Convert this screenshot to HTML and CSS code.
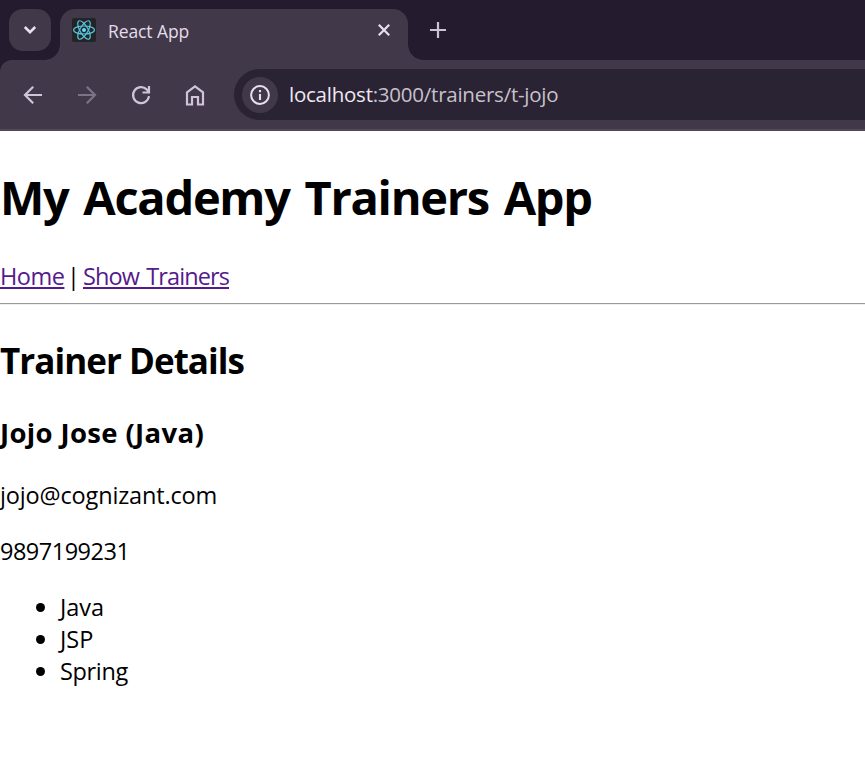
FILE: index.html
```
<!DOCTYPE html>
<html lang="en">
<head>
<meta charset="utf-8">
<title>React App</title>
<link rel="stylesheet" href="styles.css">
</head>
<body>
<header class="browser">
  <div class="tabs">
    <button class="search-tabs" aria-label="Search tabs"><svg width="14" height="10" viewBox="0 0 14 10"><path d="M1.8 2 7 7.2 12.2 2" fill="none" stroke="#e9e0ee" stroke-width="2.6"/></svg></button>
    <div class="tab">
      <svg class="favicon" width="24" height="24" viewBox="0 0 24 24"><rect width="24" height="24" rx="2" fill="#222426"/><g fill="none" stroke="#58c4df" stroke-width="1.2"><ellipse cx="12" cy="12" rx="10.4" ry="4"/><ellipse cx="12" cy="12" rx="10.4" ry="4" transform="rotate(60 12 12)"/><ellipse cx="12" cy="12" rx="10.4" ry="4" transform="rotate(120 12 12)"/></g><circle cx="12" cy="12" r="2" fill="#61dafb"/></svg>
      <span class="tab-title">React App</span>
      <svg class="close" width="12" height="12" viewBox="0 0 12 12"><path d="M.8.8 11.2 11.2M11.2.8.8 11.2" stroke="#e9e0ee" stroke-width="2.2"/></svg>
    </div>
    <svg class="new-tab" width="16" height="16" viewBox="0 0 16 16"><path d="M8 0V16M0 8H16" stroke="#cfc1d8" stroke-width="2.2"/></svg>
  </div>
  <div class="toolbar">
    <svg class="tool" width="24" height="24" viewBox="0 0 24 24"><path d="M21 12H4.5M12.2 3.8 4 12l8.2 8.2" fill="none" stroke="#d0c3da" stroke-width="2.2"/></svg>
    <svg class="tool" width="24" height="24" viewBox="0 0 24 24"><path d="M3 12H19.5M11.8 3.8 20 12l-8.2 8.2" fill="none" stroke="#7d7386" stroke-width="2.2"/></svg>
    <svg class="tool" width="24" height="24" viewBox="0 0 24 24"><path d="M20 13.2A8 8 0 1 1 17.700 6.400L20 8.800M20 3V9.500H13.500" fill="none" stroke="#d0c3da" stroke-width="2.2"/></svg>
    <svg class="tool" width="24" height="24" viewBox="0 0 24 24"><path d="M4 9.3 12 3.3l8 6V21.500H15V14H9v7.500H4Z" fill="none" stroke="#d0c3da" stroke-width="2.2"/></svg>
    <div class="address">
      <span class="site-info"><svg width="20" height="20" viewBox="0 0 20 20"><circle cx="10" cy="10" r="8.900" fill="none" stroke="#e9e0ee" stroke-width="2"/><path d="M10 9v6M10 5v2.200" stroke="#e9e0ee" stroke-width="2.100"/></svg></span>
      <span class="url"><span class="host">localhost</span><span class="path">:3000/trainers/t-jojo</span></span>
    </div>
  </div>
</header>
<main>
  <h1>My Academy Trainers App</h1>
  <nav><a class="home" href="#">Home</a><span class="divider">|</span><a class="show" href="#">Show Trainers</a></nav>
  <hr>
  <h2>Trainer Details</h2>
  <h3>Jojo Jose (Java)</h3>
  <p class="email">jojo@cognizant.com</p>
  <p class="phone">9897199231</p>
  <ul><li>Java</li><li>JSP</li><li class="spring">Spring</li></ul>
</main>
</body>
</html>
```
FILE: styles.css
```
* { box-sizing: border-box; }
body { margin: 0; background: #fff; color: #000; font: 23.5px/32px "Open Sans", "Noto Sans", sans-serif; overflow: hidden; }
svg { display: block; flex: none; }
.browser { height: 131px; background: #241c2e; }
.tabs { height: 60px; display: flex; padding: 9px 0 0 9px; }
.search-tabs { width: 42px; height: 42px; border: 0; border-radius: 14px; padding: 0; background: #41394a; display: grid; place-items: center; }
.tab { position: relative; width: 348px; height: 51px; margin-left: 9px; padding: 0 18px 9px 12px; background: #41394a; border-radius: 15px 15px 0 0; display: flex; align-items: center; }
.tab::before, .tab::after { content: ""; position: absolute; bottom: 0; width: 15px; height: 15px; }
.tab::before { right: 100%; background: radial-gradient(circle at 0 0, transparent 14.5px, #41394a 15px); }
.tab::after { left: 100%; background: radial-gradient(circle at 100% 0, transparent 14.5px, #41394a 15px); }
.tab-title { margin: 2px 0 0 12px; color: #e5dce9; font-size: 17.5px; letter-spacing: -0.1px; line-height: 24px; white-space: nowrap; }
.favicon { margin-bottom: 1px; }
.close { margin-left: auto; }
.new-tab { margin: 13px 0 0 22px; }
.toolbar { height: 71px; display: flex; align-items: center; padding-left: 21px; background: #41394a; border-radius: 12px 0 0 0; border-bottom: 2px solid #51485a; }
.tool { margin-right: 30px; }
.address { flex: 1; height: 51px; margin-left: -3px; display: flex; align-items: center; padding-left: 8px; background: #2a2333; border-radius: 26px 0 0 26px; }
.site-info { width: 36px; height: 36px; border-radius: 50%; background: #41394a; display: grid; place-items: center; }
.url { margin: 0 0 2px 11px; font-size: 20.5px; letter-spacing: -0.24px; line-height: 30px; white-space: nowrap; }
.host { color: #eee8f2; }
.path { color: #c8c1cc; }
h1, h2, h3 { white-space: nowrap; font-weight: 700; }
h1 { margin: 34px 0 31px; font-size: 47px; line-height: 64px; letter-spacing: -1.3px; word-spacing: 4px; }
main { display: flow-root; }
nav { height: 32px; display: flex; }
a { color: #551a8b; text-decoration-thickness: 2px; text-underline-offset: 2px; }
.home { width: 64px; letter-spacing: -0.5px; }
.show { letter-spacing: -0.9px; word-spacing: 2px; }
.divider { width: 19px; text-align: center; }
hr { height: 2px; margin: 11px 0 12px; border: 0; border-top: 1px solid #9a9a9a; border-bottom: 1px solid #eee; }
h2 { margin: 32px 0 29px; font-size: 35px; line-height: 48px; letter-spacing: -0.96px; }
h3 { margin: 0 0 27px; font-size: 27.5px; line-height: 38px; letter-spacing: 0.35px; }
p { margin: 24px 0; }
.email { letter-spacing: -0.15px; }
.phone { letter-spacing: -0.5px; }
ul { margin: 24px 0; padding-left: 60px; }
li { height: 32px; }
li::marker { font-size: 24px; }
.spring { letter-spacing: -0.35px; }
```
